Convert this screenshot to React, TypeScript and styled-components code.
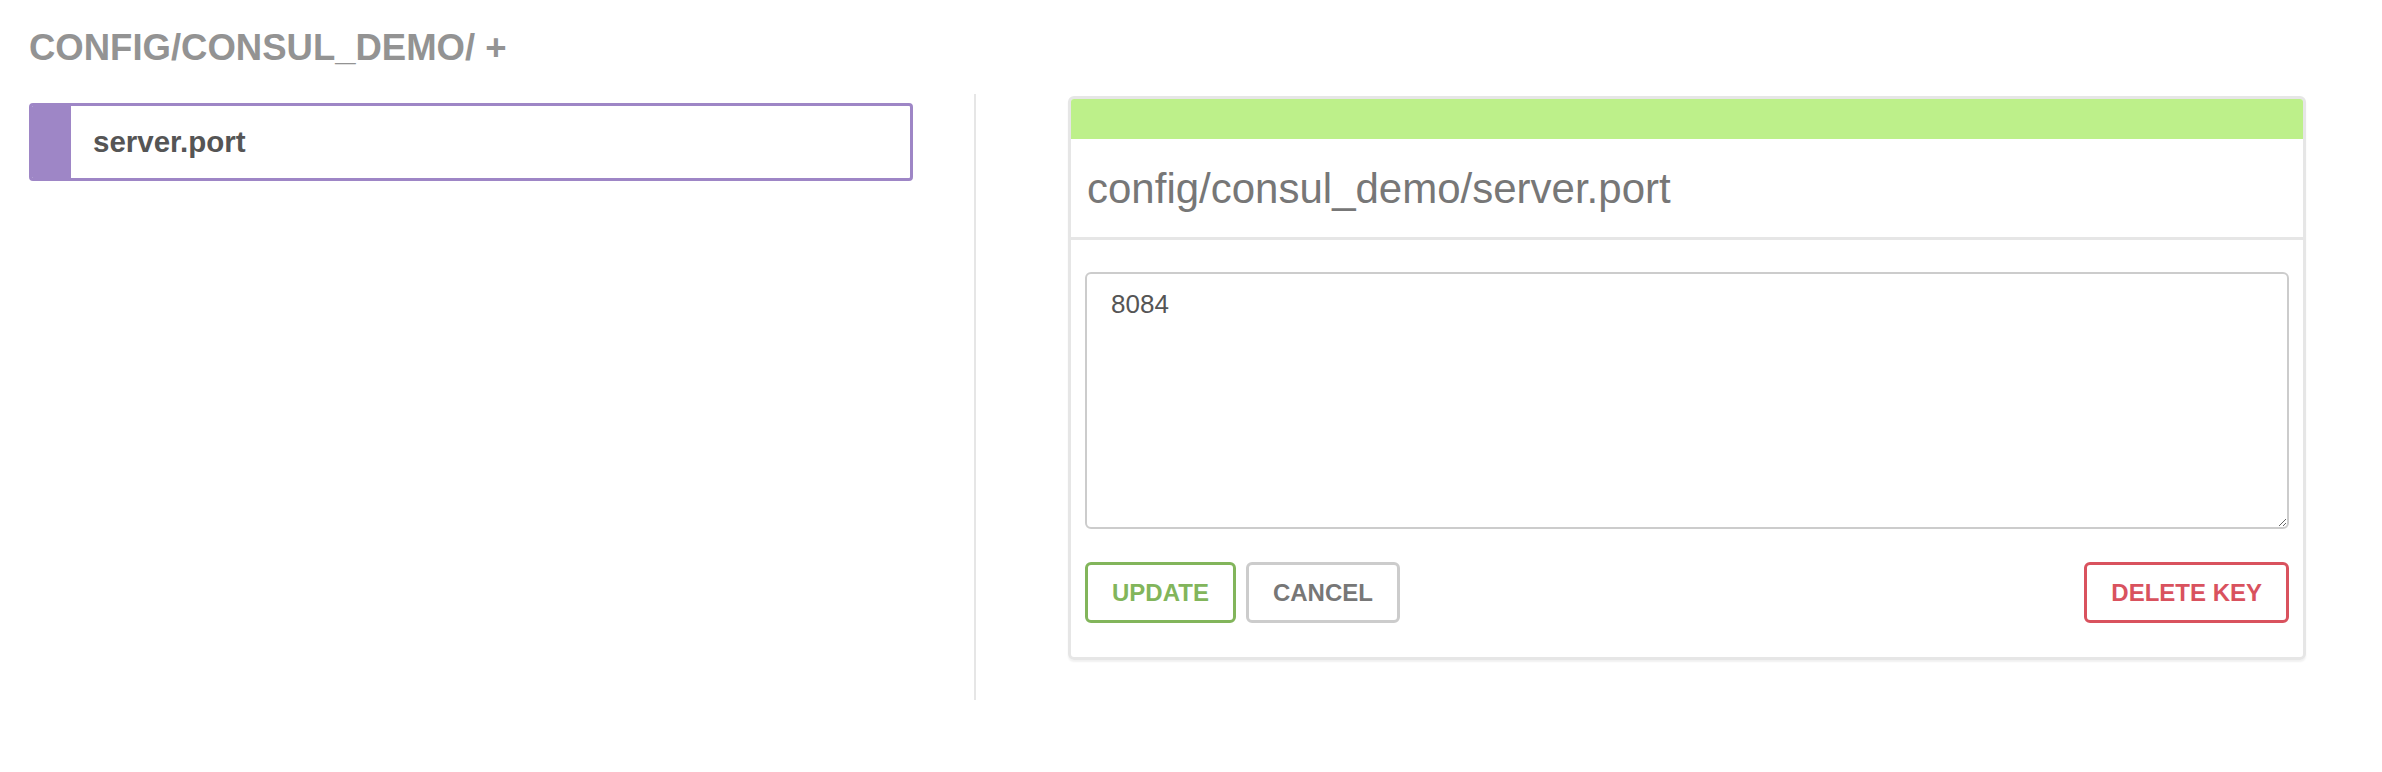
import styled, { createGlobalStyle } from 'styled-components';

const GlobalStyle = createGlobalStyle`
	body {
		margin: 0;
		background: #ffffff;
		font-family: 'Liberation Sans', Arial, sans-serif;
	}
`;

interface ButtonProps {
	$tone: 'green' | 'gray' | 'red';
}

const tones = {
	green: '#82b55b',
	gray: '#cccccc',
	red: '#d9525e',
};

const textTones = {
	green: '#82b55b',
	gray: '#777777',
	red: '#d9525e',
};

export default function App() {
	return (
		<>
			<GlobalStyle />
			<Page>
				<Breadcrumb>CONFIG/CONSUL_DEMO/ +</Breadcrumb>
				<Row>
					<KeyColumn>
						<KeyItem>
							<KeyMarker />
							<KeyName>server.port</KeyName>
						</KeyItem>
					</KeyColumn>
					<EditorCard>
						<StatusBar />
						<CardTitle>config/consul_demo/server.port</CardTitle>
						<CardBody>
							<ValueInput defaultValue='8084' />
							<Actions>
								<ActionGroup>
									<ActionButton $tone='green'>Update</ActionButton>
									<ActionButton $tone='gray'>Cancel</ActionButton>
								</ActionGroup>
								<ActionButton $tone='red'>Delete key</ActionButton>
							</Actions>
						</CardBody>
					</EditorCard>
				</Row>
			</Page>
		</>
	);
}

const Page = styled.div`
	display: flex;
	flex-direction: column;
	padding: 27px 76px 0 29px;
`;

const Breadcrumb = styled.div`
	font-size: 36.5px;
	line-height: 42px;
	font-weight: 700;
	color: #939393;
	height: 67px;
`;

const Row = styled.div`
	display: flex;
	align-items: flex-start;
`;

const KeyColumn = styled.div`
	width: 884px;
	min-height: 597px;
	padding: 9px 61px 0 0;
	border-right: 2px solid #e6e6e6;
`;

const KeyItem = styled.div`
	display: flex;
	align-items: center;
	height: 78px;
	box-sizing: border-box;
	border: 3px solid #9e86c6;
	border-radius: 4px;
	overflow: hidden;
`;

const KeyMarker = styled.div`
	width: 39px;
	align-self: stretch;
	background: #9e86c6;
`;

const KeyName = styled.div`
	padding-left: 22px;
	font-size: 29.5px;
	font-weight: 700;
	color: #555555;
`;

const EditorCard = styled.div`
	margin: 2px 0 0 92px;
	flex: 1;
	box-sizing: border-box;
	border: 3px solid #e6e6e6;
	border-radius: 6px;
	box-shadow: 0 2px 2px rgba(0, 0, 0, 0.06);
	overflow: hidden;
`;

const StatusBar = styled.div`
	height: 40px;
	background: #bdf08a;
`;

const CardTitle = styled.div`
	height: 101px;
	display: flex;
	align-items: center;
	padding: 2px 0 0 16px;
	box-sizing: border-box;
	font-size: 42px;
	color: #777777;
	border-bottom: 3px solid #e6e6e6;
`;

const CardBody = styled.div`
	padding: 32px 14px 34px;
	display: flex;
	flex-direction: column;
	gap: 33px;
`;

const ValueInput = styled.textarea`
	box-sizing: border-box;
	height: 257px;
	width: 100%;
	padding: 12px 24px;
	font-family: 'Liberation Sans', Arial, sans-serif;
	font-size: 26px;
	line-height: 36px;
	color: #555555;
	border: 2px solid #cccccc;
	border-radius: 6px;
	outline: none;
`;

const Actions = styled.div`
	display: flex;
	justify-content: space-between;
`;

const ActionGroup = styled.div`
	display: flex;
	gap: 10px;
`;

const ActionButton = styled.button<ButtonProps>`
	height: 61px;
	padding: 0 24px;
	background: #ffffff;
	border: 3px solid ${({ $tone }) => tones[$tone]};
	border-radius: 6px;
	color: ${({ $tone }) => textTones[$tone]};
	font-family: 'Liberation Sans', Arial, sans-serif;
	font-size: 24px;
	font-weight: 700;
	text-transform: uppercase;
	cursor: pointer;
`;
